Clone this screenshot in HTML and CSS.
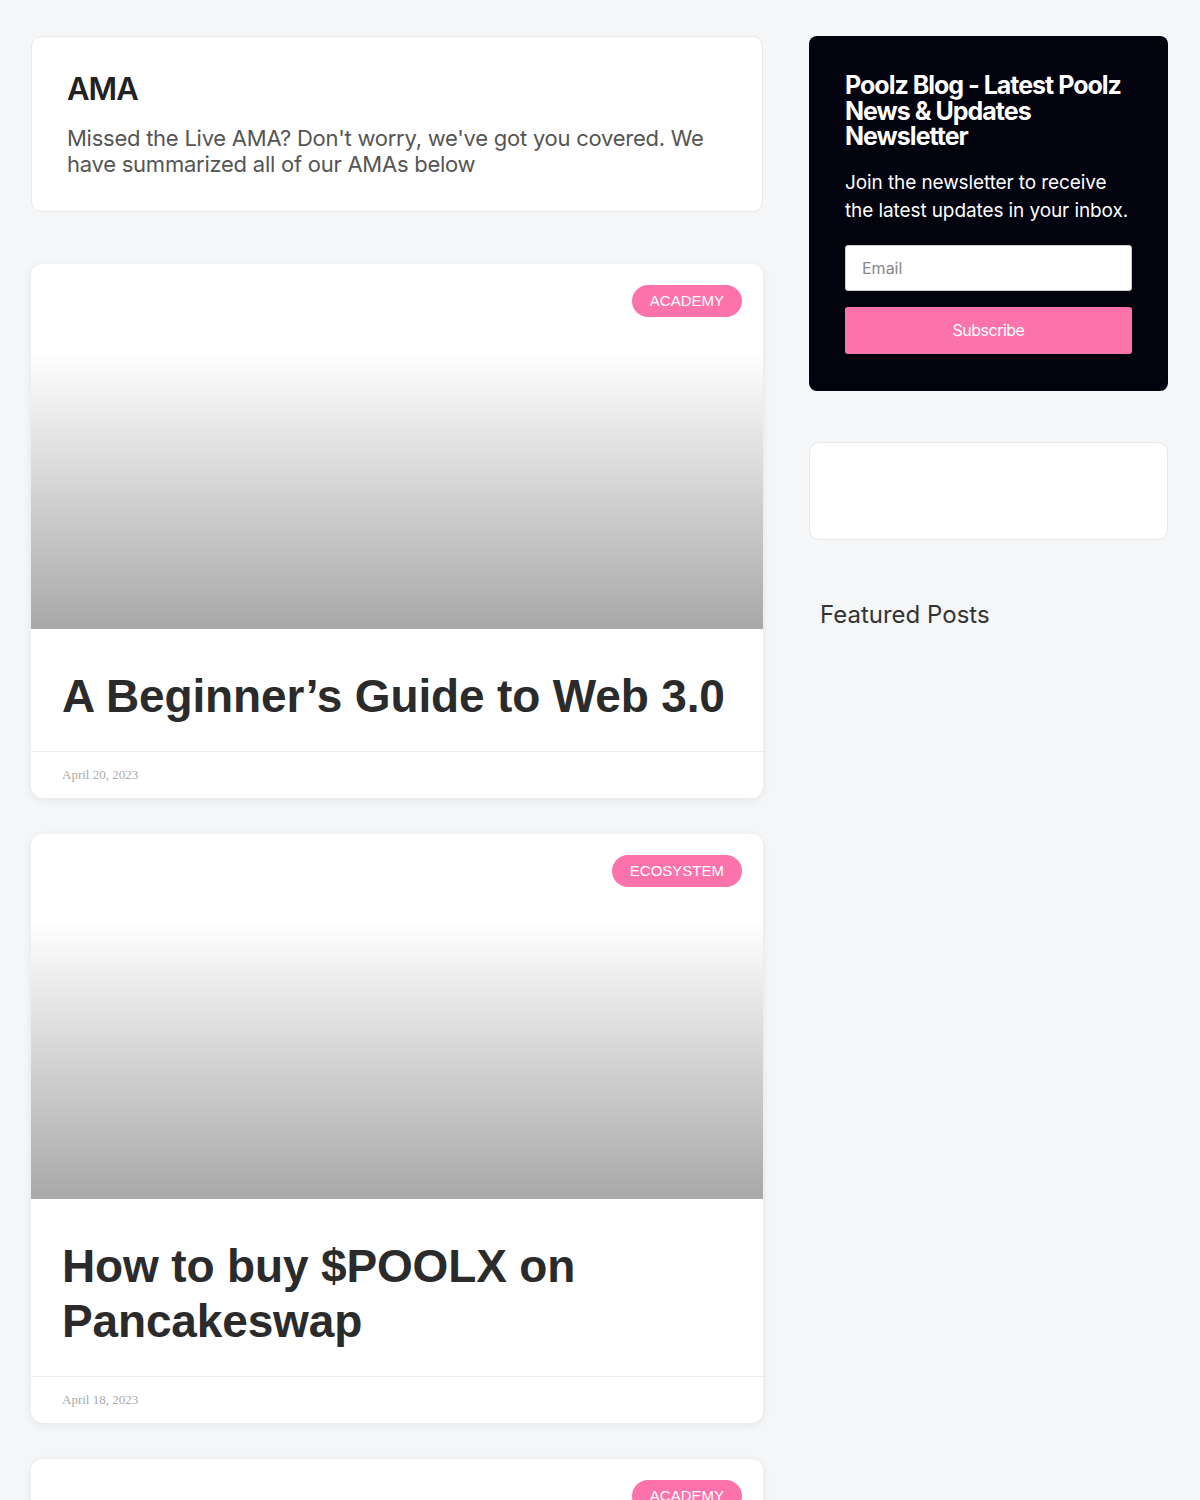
FILE: index.html
```html
<!DOCTYPE html>
<html lang="en">
<head>
  <meta charset="UTF-8" />
  <meta name="viewport" content="width=device-width, initial-scale=1.0" />
  <title>AMA - Poolz Blog</title>
  <link rel="stylesheet" href="styles.css">
</head>
<body>
  <div class="page">
    <main class="posts">
      <div class="intro">
        <h1>AMA</h1>
        <p>Missed the Live AMA? Don't worry, we've got you covered. We have summarized all of our AMAs below</p>
      </div>

      <article class="post">
        <div class="post-image">
          <span class="tag">Academy</span>
        </div>
        <h2 class="post-title">A Beginner’s Guide to Web 3.0</h2>
        <div class="post-meta">April 20, 2023</div>
      </article>

      <article class="post">
        <div class="post-image">
          <span class="tag">Ecosystem</span>
        </div>
        <h2 class="post-title">How to buy $POOLX on Pancakeswap</h2>
        <div class="post-meta">April 18, 2023</div>
      </article>

      <article class="post">
        <div class="post-image">
          <span class="tag">Academy</span>
        </div>
        <h2 class="post-title">Poolz Finance AMA Recap</h2>
        <div class="post-meta">April 12, 2023</div>
      </article>
    </main>

    <aside class="sidebar">
      <div class="newsletter">
        <h3>Poolz Blog - Latest Poolz News &amp; Updates Newsletter</h3>
        <p>Join the newsletter to receive the latest updates in your inbox.</p>
        <input type="email" placeholder="Email" />
        <button>Subscribe</button>
      </div>

      <div class="widget-box"></div>

      <h4 class="featured">Featured Posts</h4>
    </aside>
  </div>
</body>
</html>
```

FILE: styles.css
```css
body {
  margin: 0;
  background: #f5f6f8;
  font-family: 'Inter', 'Liberation Sans', sans-serif;
  color: #333;
}
.page {
  display: grid;
  grid-template-columns: 732px 359px;
  gap: 46px;
  padding: 36px 31px 0;
}
.posts {
  display: flex;
  flex-direction: column;
  gap: 36px;
}

/* AMA header box */
.intro {
  background: #fff;
  border: 1px solid #e8e9eb;
  border-radius: 10px;
  padding: 34px 36px 34px 35px;
  margin-bottom: 16px;
}
.intro h1 {
  margin: 0 0 18px;
  font-size: 31px;
  line-height: 36px;
  font-weight: 600;
  letter-spacing: -1px;
  color: #222;
}
.intro p {
  margin: 0;
  font-size: 22px;
  line-height: 26px;
  letter-spacing: -0.25px;
  color: #555;
}

/* post cards */
.post {
  background: #fff;
  border-radius: 12px;
  overflow: hidden;
  box-shadow: 0 2px 8px rgba(0,0,0,0.08);
}
.post-image {
  position: relative;
  height: 365px;
  background: linear-gradient(to bottom, #fff 0%, #fff 24%, #a8a8a8 100%);
}
.tag {
  position: absolute;
  top: 21px;
  right: 21px;
  padding: 0 18px;
  height: 32px;
  line-height: 32px;
  border-radius: 16px;
  background: #fc73ab;
  color: #fff;
  font-family: 'Liberation Sans', Arial, sans-serif;
  font-size: 15px;
  text-transform: uppercase;
}
.post-title {
  margin: 0;
  padding: 40px 31px 27px;
  font-family: 'Liberation Sans', Arial, sans-serif;
  font-size: 46px;
  line-height: 55px;
  font-weight: 700;
  letter-spacing: -0.15px;
  color: #2b2b2b;
  border-bottom: 1px solid #ececec;
}
.post-meta {
  padding: 0 31px;
  height: 46px;
  line-height: 46px;
  font-family: 'Liberation Serif', serif;
  font-size: 13px;
  color: #aaa;
}

/* sidebar */
.newsletter {
  background: #03020f;
  border-radius: 8px;
  padding: 37px 36px 37px;
  color: #fff;
}
.newsletter h3 {
  margin: 0 0 19px;
  font-size: 25px;
  line-height: 25.5px;
  font-weight: 700;
  letter-spacing: -1px;
}
.newsletter p {
  margin: 0 0 20px;
  font-size: 19px;
  line-height: 28px;
  letter-spacing: -0.1px;
}
.newsletter input {
  display: block;
  box-sizing: border-box;
  width: 100%;
  height: 46px;
  margin: 0 0 16px;
  padding: 0 16px;
  border: 1px solid #ccc;
  border-radius: 3px;
  font-family: 'Inter', sans-serif;
  font-size: 16px;
}
.newsletter input::placeholder {
  color: #888;
}
.newsletter button {
  display: block;
  width: 100%;
  height: 47px;
  border: none;
  border-radius: 3px;
  background: #fc73ab;
  color: #fff;
  font-family: 'Inter', sans-serif;
  font-size: 16px;
  letter-spacing: -0.5px;
}
.widget-box {
  margin-top: 51px;
  height: 96px;
  background: #fff;
  border: 1px solid #e8e9eb;
  border-radius: 10px;
}
.featured {
  margin: 60px 0 0 11px;
  font-size: 24px;
  line-height: 30px;
  font-weight: 400;
  color: #333;
}
```
